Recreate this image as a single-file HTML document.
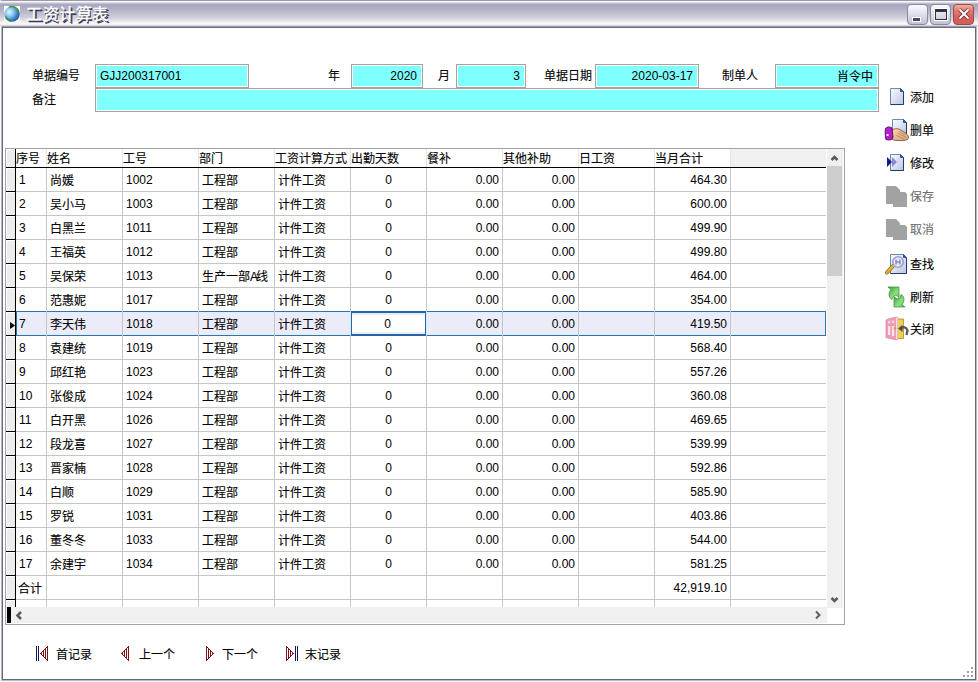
<!DOCTYPE html>
<html lang="zh-CN"><head><meta charset="utf-8">
<style>
*{box-sizing:border-box;margin:0;padding:0}
html,body{width:978px;height:682px;overflow:hidden;background:#fff;font-family:"Liberation Sans",sans-serif;font-size:12px;color:#000}
.a{position:absolute}
#title{left:0;top:0;width:978px;height:28px;background:linear-gradient(to bottom,#9a9aaa 0px,#9a9aaa 1px,#f6f6fb 1px,#f6f6fb 2px,#dedee8 2px,#dedee8 3px,#bebece 3px,#bebece 4px,#ababc2 4px,#ababc2 5px,#a8a8c0 5px,#a8a8c0 6px,#aaaac2 6px,#aaaac2 7px,#adadc4 7px,#adadc4 8px,#b0b0c5 8px,#b0b0c5 9px,#b3b3c7 9px,#b3b3c7 10px,#b6b6c9 10px,#b6b6c9 11px,#b9b9cb 11px,#b9b9cb 12px,#bcbccd 12px,#bcbccd 13px,#bfbfcf 13px,#bfbfcf 14px,#c3c3d2 14px,#c3c3d2 15px,#c7c7d5 15px,#c7c7d5 16px,#cbcbd8 16px,#cbcbd8 17px,#d0d0dc 17px,#d0d0dc 18px,#d6d6e0 18px,#d6d6e0 19px,#dcdce5 19px,#dcdce5 20px,#e3e3ea 20px,#e3e3ea 21px,#ebebf0 21px,#ebebf0 22px,#f3f3f6 22px,#f3f3f6 23px,#f8f8fa 23px,#f8f8fa 24px,#f0f0f4 24px,#f0f0f4 25px,#d4d4dc 25px,#d4d4dc 26px,#9c9cab 26px,#9c9cab 27px,#6c6c7c 27px,#6c6c7c 28px);border-radius:2px 2px 0 0}
#frameL{left:0;top:26px;width:2px;height:655px;background:linear-gradient(to right,#fafafc 0,#fafafc 1px,#b8b8c6 1px,#b8b8c6 2px)}
#frameR{left:976px;top:26px;width:2px;height:655px;background:linear-gradient(to right,#b8b8c6 0,#b8b8c6 1px,#fafafc 1px)}
#frameL2{left:2px;top:27px;width:1px;height:653px;background:#686878}
#frameR2{left:975px;top:27px;width:1px;height:653px;background:#686878}
#frameB{left:2px;top:679px;width:974px;height:1px;background:#686878}
#frameB2{left:1px;top:680px;width:976px;height:2px;background:linear-gradient(to bottom,#b8b8c6 0,#b8b8c6 1px,#fafafc 1px)}
.ttl{left:26px;top:6px;font-size:16px;font-weight:500;color:#fff;-webkit-text-stroke:0.4px #fff;text-shadow:1px 1px 0 #3a3a52,1.5px 1.5px 0 #3a3a52;letter-spacing:0.6px;line-height:18px}
.tb{top:4px;width:21px;height:21px;border:1px solid #8a8aa2;border-radius:4px;background:linear-gradient(to bottom,#fbfbfe,#e4e4ee 40%,#c0c0d4)}
.tbc{background:linear-gradient(to bottom,#f4b0a4,#e47870 30%,#d85c5a 70%,#d06058);border-color:#a04a48}
.lbl{height:14px;line-height:14px;white-space:nowrap}
.ed{border:1px solid #a3a3a3;background:#80ffff;box-shadow:inset 0 0 0 1px #fff;height:24px;line-height:22px;padding:0 5px 0 4px;white-space:nowrap}
.r{text-align:right}
.z{-webkit-text-stroke:0.1px #000;margin-top:1px}
.zs{-webkit-text-stroke:0.1px #000;position:relative;top:1px}
.btn{left:884px;width:70px;height:24px}
.btn .t{position:absolute;left:26px;top:4px;line-height:14px}
.grid{left:5px;top:148px;width:840px;height:477px;border:1px solid #a0a0a0;background:#fff;overflow:hidden}
.nav{top:646px;height:15px}
.nav .t{position:absolute;top:1px;line-height:14px;white-space:nowrap}
.ind{left:6px;width:9px;background:#ededed;border-top:1px solid #fff;border-left:1px solid #fff}
.cl{width:1px;background:#c6c6c6}
.rl{left:16px;width:810px;height:1px;background:#c6c6c6}
.ht{top:151px;line-height:14px;white-space:nowrap}
.dt{height:23px;line-height:23px;padding-top:1px;white-space:nowrap;overflow:hidden}
.sel{background:#ebebfa;border:1px solid #3b6ea8;box-shadow:inset 0 0 0 1px #d4f4ff}
.edc{background:#fff;border:1px solid #2a64a8;border-top-width:2px;border-bottom-width:2px;box-shadow:inset 0 1px 0 #d0f8ff, inset 0 2px 0 #e8e8f8, inset 0 -2px 0 #ebebfa}
</style></head><body>
<div id="title" class="a"></div>
<div id="frameL" class="a"></div>
<div id="frameR" class="a"></div>
<div id="frameB2" class="a"></div><div id="frameB" class="a"></div><div id="frameL2" class="a"></div><div id="frameR2" class="a"></div>
<!-- icon -->
<svg class="a" style="left:4px;top:6px" width="16" height="16" viewBox="0 0 16 16">
<defs><radialGradient id="gl" cx="0.33" cy="0.38" r="0.75"><stop offset="0" stop-color="#e0f6ff"/><stop offset="0.35" stop-color="#8cc8f0"/><stop offset="0.7" stop-color="#3a80c8"/><stop offset="1" stop-color="#1a4a8a"/></radialGradient></defs>
<rect width="16" height="16" fill="#fff"/>
<circle cx="8" cy="8" r="7.8" fill="url(#gl)"/>
<path d="M5 1.2A7.2 7.2 0 0 1 14.8 5.5" stroke="#5a9432" stroke-width="1.6" fill="none"/>
<path d="M1.6 10.5A7.2 7.2 0 0 0 7 15.2" stroke="#4e8a30" stroke-width="1.6" fill="none"/>
</svg>
<div class="a ttl">工资计算表</div>
<div class="a tb" style="left:907px"><div class="a" style="left:4px;top:12px;width:9px;height:5px;background:#484868;border:1px solid #fff"></div></div>
<div class="a tb" style="left:930px"><div class="a" style="left:4px;top:4px;width:12px;height:11px;border:1px solid #303040;border-top-width:3px;box-shadow:0 0 0 1px #fff;background:transparent"></div></div>
<div class="a tb tbc" style="left:953px">
<svg class="a" style="left:2px;top:1px" width="16" height="16" viewBox="0 0 16 16"><path d="M3.5 3.5L12.5 12.5M12.5 3.5L3.5 12.5" stroke="#5a2020" stroke-width="3.4"/><path d="M3.5 3.5L12.5 12.5M12.5 3.5L3.5 12.5" stroke="#fff" stroke-width="2"/></svg>
</div>

<!-- header form -->
<div class="a lbl z" style="left:32px;top:68px">单据编号</div>
<div class="a ed" style="left:95px;top:64px;width:154px">GJJ200317001</div>
<div class="a lbl z" style="left:328px;top:68px">年</div>
<div class="a ed r" style="left:351px;top:64px;width:72px">2020</div>
<div class="a lbl z" style="left:438px;top:68px">月</div>
<div class="a ed r" style="left:456px;top:64px;width:70px">3</div>
<div class="a lbl z" style="left:544px;top:68px">单据日期</div>
<div class="a ed r" style="left:595px;top:64px;width:104px">2020-03-17</div>
<div class="a lbl z" style="left:722px;top:68px">制单人</div>
<div class="a ed r" style="left:775px;top:64px;width:104px"><span class="zs">肖令中</span></div>
<div class="a lbl z" style="left:32px;top:92px">备注</div>
<div class="a ed" style="left:95px;top:88px;width:784px"></div>

<div class="a" style="left:5px;top:148px;width:840px;height:477px;border:1px solid #a3a3a3"></div>
<div class="a" style="left:731px;top:149px;width:95px;height:18px;background:#f0f0f0"></div>
<div class="a ind" style="top:149px;height:18px"></div>
<div class="a ind" style="top:168px;height:23px"></div>
<div class="a ind" style="top:192px;height:23px"></div>
<div class="a ind" style="top:216px;height:23px"></div>
<div class="a ind" style="top:240px;height:23px"></div>
<div class="a ind" style="top:264px;height:23px"></div>
<div class="a ind" style="top:288px;height:23px"></div>
<div class="a ind" style="top:312px;height:23px"></div>
<div class="a ind" style="top:336px;height:23px"></div>
<div class="a ind" style="top:360px;height:23px"></div>
<div class="a ind" style="top:384px;height:23px"></div>
<div class="a ind" style="top:408px;height:23px"></div>
<div class="a ind" style="top:432px;height:23px"></div>
<div class="a ind" style="top:456px;height:23px"></div>
<div class="a ind" style="top:480px;height:23px"></div>
<div class="a ind" style="top:504px;height:23px"></div>
<div class="a ind" style="top:528px;height:23px"></div>
<div class="a ind" style="top:552px;height:23px"></div>
<div class="a ind" style="top:576px;height:23px"></div>
<div class="a ind" style="top:600px;height:7px"></div>
<div class="a sel" style="left:16px;top:311px;width:810px;height:25px"></div>
<div class="a" style="left:46px;top:149px;width:1px;height:18px;background:#e6e6e6"></div>
<div class="a cl" style="left:46px;top:168px;height:439px"></div>
<div class="a" style="left:122px;top:149px;width:1px;height:18px;background:#e6e6e6"></div>
<div class="a cl" style="left:122px;top:168px;height:439px"></div>
<div class="a" style="left:198px;top:149px;width:1px;height:18px;background:#e6e6e6"></div>
<div class="a cl" style="left:198px;top:168px;height:439px"></div>
<div class="a" style="left:274px;top:149px;width:1px;height:18px;background:#e6e6e6"></div>
<div class="a cl" style="left:274px;top:168px;height:439px"></div>
<div class="a" style="left:350px;top:149px;width:1px;height:18px;background:#e6e6e6"></div>
<div class="a cl" style="left:350px;top:168px;height:439px"></div>
<div class="a" style="left:426px;top:149px;width:1px;height:18px;background:#e6e6e6"></div>
<div class="a cl" style="left:426px;top:168px;height:439px"></div>
<div class="a" style="left:502px;top:149px;width:1px;height:18px;background:#e6e6e6"></div>
<div class="a cl" style="left:502px;top:168px;height:439px"></div>
<div class="a" style="left:578px;top:149px;width:1px;height:18px;background:#e6e6e6"></div>
<div class="a cl" style="left:578px;top:168px;height:439px"></div>
<div class="a" style="left:654px;top:149px;width:1px;height:18px;background:#e6e6e6"></div>
<div class="a cl" style="left:654px;top:168px;height:439px"></div>
<div class="a" style="left:730px;top:149px;width:1px;height:18px;background:#e6e6e6"></div>
<div class="a cl" style="left:730px;top:168px;height:439px"></div>
<div class="a" style="left:15px;top:149px;width:1px;height:458px;background:#000"></div>
<div class="a" style="left:6px;top:167px;width:820px;height:1px;background:#000"></div>
<div class="a" style="left:6px;top:191px;width:10px;height:1px;background:#000"></div>
<div class="a rl" style="top:191px"></div>
<div class="a" style="left:6px;top:215px;width:10px;height:1px;background:#000"></div>
<div class="a rl" style="top:215px"></div>
<div class="a" style="left:6px;top:239px;width:10px;height:1px;background:#000"></div>
<div class="a rl" style="top:239px"></div>
<div class="a" style="left:6px;top:263px;width:10px;height:1px;background:#000"></div>
<div class="a rl" style="top:263px"></div>
<div class="a" style="left:6px;top:287px;width:10px;height:1px;background:#000"></div>
<div class="a rl" style="top:287px"></div>
<div class="a" style="left:6px;top:311px;width:10px;height:1px;background:#000"></div>
<div class="a" style="left:6px;top:335px;width:10px;height:1px;background:#000"></div>
<div class="a" style="left:6px;top:359px;width:10px;height:1px;background:#000"></div>
<div class="a rl" style="top:359px"></div>
<div class="a" style="left:6px;top:383px;width:10px;height:1px;background:#000"></div>
<div class="a rl" style="top:383px"></div>
<div class="a" style="left:6px;top:407px;width:10px;height:1px;background:#000"></div>
<div class="a rl" style="top:407px"></div>
<div class="a" style="left:6px;top:431px;width:10px;height:1px;background:#000"></div>
<div class="a rl" style="top:431px"></div>
<div class="a" style="left:6px;top:455px;width:10px;height:1px;background:#000"></div>
<div class="a rl" style="top:455px"></div>
<div class="a" style="left:6px;top:479px;width:10px;height:1px;background:#000"></div>
<div class="a rl" style="top:479px"></div>
<div class="a" style="left:6px;top:503px;width:10px;height:1px;background:#000"></div>
<div class="a rl" style="top:503px"></div>
<div class="a" style="left:6px;top:527px;width:10px;height:1px;background:#000"></div>
<div class="a rl" style="top:527px"></div>
<div class="a" style="left:6px;top:551px;width:10px;height:1px;background:#000"></div>
<div class="a rl" style="top:551px"></div>
<div class="a" style="left:6px;top:575px;width:10px;height:1px;background:#000"></div>
<div class="a rl" style="top:575px"></div>
<div class="a" style="left:6px;top:599px;width:10px;height:1px;background:#000"></div>
<div class="a rl" style="top:599px"></div>
<div class="a ht z" style="left:16px">序号</div>
<div class="a ht z" style="left:47px">姓名</div>
<div class="a ht z" style="left:123px">工号</div>
<div class="a ht z" style="left:199px">部门</div>
<div class="a ht z" style="left:275px">工资计算方式</div>
<div class="a ht z" style="left:351px">出勤天数</div>
<div class="a ht z" style="left:427px">餐补</div>
<div class="a ht z" style="left:503px">其他补助</div>
<div class="a ht z" style="left:579px">日工资</div>
<div class="a ht z" style="left:655px">当月合计</div>
<div class="a dt" style="left:16px;top:168px;width:30px;padding-left:3px">1</div>
<div class="a dt z" style="left:47px;top:168px;width:75px;padding-left:3px">尚媛</div>
<div class="a dt" style="left:123px;top:168px;width:75px;padding-left:3px">1002</div>
<div class="a dt z" style="left:199px;top:168px;width:75px;padding-left:3px">工程部</div>
<div class="a dt z" style="left:275px;top:168px;width:75px;padding-left:3px">计件工资</div>
<div class="a dt" style="left:351px;top:168px;width:75px;text-align:center">0</div>
<div class="a dt" style="left:427px;top:168px;width:75px;padding-right:3px;text-align:right">0.00</div>
<div class="a dt" style="left:503px;top:168px;width:75px;padding-right:3px;text-align:right">0.00</div>
<div class="a dt" style="left:655px;top:168px;width:75px;padding-right:3px;text-align:right">464.30</div>
<div class="a dt" style="left:16px;top:192px;width:30px;padding-left:3px">2</div>
<div class="a dt z" style="left:47px;top:192px;width:75px;padding-left:3px">吴小马</div>
<div class="a dt" style="left:123px;top:192px;width:75px;padding-left:3px">1003</div>
<div class="a dt z" style="left:199px;top:192px;width:75px;padding-left:3px">工程部</div>
<div class="a dt z" style="left:275px;top:192px;width:75px;padding-left:3px">计件工资</div>
<div class="a dt" style="left:351px;top:192px;width:75px;text-align:center">0</div>
<div class="a dt" style="left:427px;top:192px;width:75px;padding-right:3px;text-align:right">0.00</div>
<div class="a dt" style="left:503px;top:192px;width:75px;padding-right:3px;text-align:right">0.00</div>
<div class="a dt" style="left:655px;top:192px;width:75px;padding-right:3px;text-align:right">600.00</div>
<div class="a dt" style="left:16px;top:216px;width:30px;padding-left:3px">3</div>
<div class="a dt z" style="left:47px;top:216px;width:75px;padding-left:3px">白黑兰</div>
<div class="a dt" style="left:123px;top:216px;width:75px;padding-left:3px">1011</div>
<div class="a dt z" style="left:199px;top:216px;width:75px;padding-left:3px">工程部</div>
<div class="a dt z" style="left:275px;top:216px;width:75px;padding-left:3px">计件工资</div>
<div class="a dt" style="left:351px;top:216px;width:75px;text-align:center">0</div>
<div class="a dt" style="left:427px;top:216px;width:75px;padding-right:3px;text-align:right">0.00</div>
<div class="a dt" style="left:503px;top:216px;width:75px;padding-right:3px;text-align:right">0.00</div>
<div class="a dt" style="left:655px;top:216px;width:75px;padding-right:3px;text-align:right">499.90</div>
<div class="a dt" style="left:16px;top:240px;width:30px;padding-left:3px">4</div>
<div class="a dt z" style="left:47px;top:240px;width:75px;padding-left:3px">王福英</div>
<div class="a dt" style="left:123px;top:240px;width:75px;padding-left:3px">1012</div>
<div class="a dt z" style="left:199px;top:240px;width:75px;padding-left:3px">工程部</div>
<div class="a dt z" style="left:275px;top:240px;width:75px;padding-left:3px">计件工资</div>
<div class="a dt" style="left:351px;top:240px;width:75px;text-align:center">0</div>
<div class="a dt" style="left:427px;top:240px;width:75px;padding-right:3px;text-align:right">0.00</div>
<div class="a dt" style="left:503px;top:240px;width:75px;padding-right:3px;text-align:right">0.00</div>
<div class="a dt" style="left:655px;top:240px;width:75px;padding-right:3px;text-align:right">499.80</div>
<div class="a dt" style="left:16px;top:264px;width:30px;padding-left:3px">5</div>
<div class="a dt z" style="left:47px;top:264px;width:75px;padding-left:3px">吴保荣</div>
<div class="a dt" style="left:123px;top:264px;width:75px;padding-left:3px">1013</div>
<div class="a dt z" style="left:199px;top:264px;width:75px;padding-left:3px">生产一部<span style="letter-spacing:-2px">A</span>线</div>
<div class="a dt z" style="left:275px;top:264px;width:75px;padding-left:3px">计件工资</div>
<div class="a dt" style="left:351px;top:264px;width:75px;text-align:center">0</div>
<div class="a dt" style="left:427px;top:264px;width:75px;padding-right:3px;text-align:right">0.00</div>
<div class="a dt" style="left:503px;top:264px;width:75px;padding-right:3px;text-align:right">0.00</div>
<div class="a dt" style="left:655px;top:264px;width:75px;padding-right:3px;text-align:right">464.00</div>
<div class="a dt" style="left:16px;top:288px;width:30px;padding-left:3px">6</div>
<div class="a dt z" style="left:47px;top:288px;width:75px;padding-left:3px">范惠妮</div>
<div class="a dt" style="left:123px;top:288px;width:75px;padding-left:3px">1017</div>
<div class="a dt z" style="left:199px;top:288px;width:75px;padding-left:3px">工程部</div>
<div class="a dt z" style="left:275px;top:288px;width:75px;padding-left:3px">计件工资</div>
<div class="a dt" style="left:351px;top:288px;width:75px;text-align:center">0</div>
<div class="a dt" style="left:427px;top:288px;width:75px;padding-right:3px;text-align:right">0.00</div>
<div class="a dt" style="left:503px;top:288px;width:75px;padding-right:3px;text-align:right">0.00</div>
<div class="a dt" style="left:655px;top:288px;width:75px;padding-right:3px;text-align:right">354.00</div>
<div class="a dt" style="left:16px;top:312px;width:30px;padding-left:3px">7</div>
<div class="a dt z" style="left:47px;top:312px;width:75px;padding-left:3px">李天伟</div>
<div class="a dt" style="left:123px;top:312px;width:75px;padding-left:3px">1018</div>
<div class="a dt z" style="left:199px;top:312px;width:75px;padding-left:3px">工程部</div>
<div class="a dt z" style="left:275px;top:312px;width:75px;padding-left:3px">计件工资</div>
<div class="a dt" style="left:351px;top:312px;width:75px;text-align:center">0</div>
<div class="a dt" style="left:427px;top:312px;width:75px;padding-right:3px;text-align:right">0.00</div>
<div class="a dt" style="left:503px;top:312px;width:75px;padding-right:3px;text-align:right">0.00</div>
<div class="a dt" style="left:655px;top:312px;width:75px;padding-right:3px;text-align:right">419.50</div>
<div class="a dt" style="left:16px;top:336px;width:30px;padding-left:3px">8</div>
<div class="a dt z" style="left:47px;top:336px;width:75px;padding-left:3px">袁建统</div>
<div class="a dt" style="left:123px;top:336px;width:75px;padding-left:3px">1019</div>
<div class="a dt z" style="left:199px;top:336px;width:75px;padding-left:3px">工程部</div>
<div class="a dt z" style="left:275px;top:336px;width:75px;padding-left:3px">计件工资</div>
<div class="a dt" style="left:351px;top:336px;width:75px;text-align:center">0</div>
<div class="a dt" style="left:427px;top:336px;width:75px;padding-right:3px;text-align:right">0.00</div>
<div class="a dt" style="left:503px;top:336px;width:75px;padding-right:3px;text-align:right">0.00</div>
<div class="a dt" style="left:655px;top:336px;width:75px;padding-right:3px;text-align:right">568.40</div>
<div class="a dt" style="left:16px;top:360px;width:30px;padding-left:3px">9</div>
<div class="a dt z" style="left:47px;top:360px;width:75px;padding-left:3px">邱红艳</div>
<div class="a dt" style="left:123px;top:360px;width:75px;padding-left:3px">1023</div>
<div class="a dt z" style="left:199px;top:360px;width:75px;padding-left:3px">工程部</div>
<div class="a dt z" style="left:275px;top:360px;width:75px;padding-left:3px">计件工资</div>
<div class="a dt" style="left:351px;top:360px;width:75px;text-align:center">0</div>
<div class="a dt" style="left:427px;top:360px;width:75px;padding-right:3px;text-align:right">0.00</div>
<div class="a dt" style="left:503px;top:360px;width:75px;padding-right:3px;text-align:right">0.00</div>
<div class="a dt" style="left:655px;top:360px;width:75px;padding-right:3px;text-align:right">557.26</div>
<div class="a dt" style="left:16px;top:384px;width:30px;padding-left:3px">10</div>
<div class="a dt z" style="left:47px;top:384px;width:75px;padding-left:3px">张俊成</div>
<div class="a dt" style="left:123px;top:384px;width:75px;padding-left:3px">1024</div>
<div class="a dt z" style="left:199px;top:384px;width:75px;padding-left:3px">工程部</div>
<div class="a dt z" style="left:275px;top:384px;width:75px;padding-left:3px">计件工资</div>
<div class="a dt" style="left:351px;top:384px;width:75px;text-align:center">0</div>
<div class="a dt" style="left:427px;top:384px;width:75px;padding-right:3px;text-align:right">0.00</div>
<div class="a dt" style="left:503px;top:384px;width:75px;padding-right:3px;text-align:right">0.00</div>
<div class="a dt" style="left:655px;top:384px;width:75px;padding-right:3px;text-align:right">360.08</div>
<div class="a dt" style="left:16px;top:408px;width:30px;padding-left:3px">11</div>
<div class="a dt z" style="left:47px;top:408px;width:75px;padding-left:3px">白开黑</div>
<div class="a dt" style="left:123px;top:408px;width:75px;padding-left:3px">1026</div>
<div class="a dt z" style="left:199px;top:408px;width:75px;padding-left:3px">工程部</div>
<div class="a dt z" style="left:275px;top:408px;width:75px;padding-left:3px">计件工资</div>
<div class="a dt" style="left:351px;top:408px;width:75px;text-align:center">0</div>
<div class="a dt" style="left:427px;top:408px;width:75px;padding-right:3px;text-align:right">0.00</div>
<div class="a dt" style="left:503px;top:408px;width:75px;padding-right:3px;text-align:right">0.00</div>
<div class="a dt" style="left:655px;top:408px;width:75px;padding-right:3px;text-align:right">469.65</div>
<div class="a dt" style="left:16px;top:432px;width:30px;padding-left:3px">12</div>
<div class="a dt z" style="left:47px;top:432px;width:75px;padding-left:3px">段龙喜</div>
<div class="a dt" style="left:123px;top:432px;width:75px;padding-left:3px">1027</div>
<div class="a dt z" style="left:199px;top:432px;width:75px;padding-left:3px">工程部</div>
<div class="a dt z" style="left:275px;top:432px;width:75px;padding-left:3px">计件工资</div>
<div class="a dt" style="left:351px;top:432px;width:75px;text-align:center">0</div>
<div class="a dt" style="left:427px;top:432px;width:75px;padding-right:3px;text-align:right">0.00</div>
<div class="a dt" style="left:503px;top:432px;width:75px;padding-right:3px;text-align:right">0.00</div>
<div class="a dt" style="left:655px;top:432px;width:75px;padding-right:3px;text-align:right">539.99</div>
<div class="a dt" style="left:16px;top:456px;width:30px;padding-left:3px">13</div>
<div class="a dt z" style="left:47px;top:456px;width:75px;padding-left:3px">晋家楠</div>
<div class="a dt" style="left:123px;top:456px;width:75px;padding-left:3px">1028</div>
<div class="a dt z" style="left:199px;top:456px;width:75px;padding-left:3px">工程部</div>
<div class="a dt z" style="left:275px;top:456px;width:75px;padding-left:3px">计件工资</div>
<div class="a dt" style="left:351px;top:456px;width:75px;text-align:center">0</div>
<div class="a dt" style="left:427px;top:456px;width:75px;padding-right:3px;text-align:right">0.00</div>
<div class="a dt" style="left:503px;top:456px;width:75px;padding-right:3px;text-align:right">0.00</div>
<div class="a dt" style="left:655px;top:456px;width:75px;padding-right:3px;text-align:right">592.86</div>
<div class="a dt" style="left:16px;top:480px;width:30px;padding-left:3px">14</div>
<div class="a dt z" style="left:47px;top:480px;width:75px;padding-left:3px">白顺</div>
<div class="a dt" style="left:123px;top:480px;width:75px;padding-left:3px">1029</div>
<div class="a dt z" style="left:199px;top:480px;width:75px;padding-left:3px">工程部</div>
<div class="a dt z" style="left:275px;top:480px;width:75px;padding-left:3px">计件工资</div>
<div class="a dt" style="left:351px;top:480px;width:75px;text-align:center">0</div>
<div class="a dt" style="left:427px;top:480px;width:75px;padding-right:3px;text-align:right">0.00</div>
<div class="a dt" style="left:503px;top:480px;width:75px;padding-right:3px;text-align:right">0.00</div>
<div class="a dt" style="left:655px;top:480px;width:75px;padding-right:3px;text-align:right">585.90</div>
<div class="a dt" style="left:16px;top:504px;width:30px;padding-left:3px">15</div>
<div class="a dt z" style="left:47px;top:504px;width:75px;padding-left:3px">罗锐</div>
<div class="a dt" style="left:123px;top:504px;width:75px;padding-left:3px">1031</div>
<div class="a dt z" style="left:199px;top:504px;width:75px;padding-left:3px">工程部</div>
<div class="a dt z" style="left:275px;top:504px;width:75px;padding-left:3px">计件工资</div>
<div class="a dt" style="left:351px;top:504px;width:75px;text-align:center">0</div>
<div class="a dt" style="left:427px;top:504px;width:75px;padding-right:3px;text-align:right">0.00</div>
<div class="a dt" style="left:503px;top:504px;width:75px;padding-right:3px;text-align:right">0.00</div>
<div class="a dt" style="left:655px;top:504px;width:75px;padding-right:3px;text-align:right">403.86</div>
<div class="a dt" style="left:16px;top:528px;width:30px;padding-left:3px">16</div>
<div class="a dt z" style="left:47px;top:528px;width:75px;padding-left:3px">董冬冬</div>
<div class="a dt" style="left:123px;top:528px;width:75px;padding-left:3px">1033</div>
<div class="a dt z" style="left:199px;top:528px;width:75px;padding-left:3px">工程部</div>
<div class="a dt z" style="left:275px;top:528px;width:75px;padding-left:3px">计件工资</div>
<div class="a dt" style="left:351px;top:528px;width:75px;text-align:center">0</div>
<div class="a dt" style="left:427px;top:528px;width:75px;padding-right:3px;text-align:right">0.00</div>
<div class="a dt" style="left:503px;top:528px;width:75px;padding-right:3px;text-align:right">0.00</div>
<div class="a dt" style="left:655px;top:528px;width:75px;padding-right:3px;text-align:right">544.00</div>
<div class="a dt" style="left:16px;top:552px;width:30px;padding-left:3px">17</div>
<div class="a dt z" style="left:47px;top:552px;width:75px;padding-left:3px">余建宇</div>
<div class="a dt" style="left:123px;top:552px;width:75px;padding-left:3px">1034</div>
<div class="a dt z" style="left:199px;top:552px;width:75px;padding-left:3px">工程部</div>
<div class="a dt z" style="left:275px;top:552px;width:75px;padding-left:3px">计件工资</div>
<div class="a dt" style="left:351px;top:552px;width:75px;text-align:center">0</div>
<div class="a dt" style="left:427px;top:552px;width:75px;padding-right:3px;text-align:right">0.00</div>
<div class="a dt" style="left:503px;top:552px;width:75px;padding-right:3px;text-align:right">0.00</div>
<div class="a dt" style="left:655px;top:552px;width:75px;padding-right:3px;text-align:right">581.25</div>
<div class="a dt z" style="left:16px;top:576px;width:30px;padding-left:2px">合计</div>
<div class="a dt" style="left:655px;top:576px;width:75px;padding-right:3px;text-align:right">42,919.10</div>
<div class="a" style="left:350px;top:312px;width:1px;height:23px;background:#c8f0ff"></div>
<div class="a" style="left:426px;top:312px;width:1px;height:23px;background:#c8f0ff"></div>
<div class="a edc" style="left:351px;top:311px;width:75px;height:25px"></div>
<div class="a dt" style="left:350px;top:312px;width:75px;text-align:center">0</div>
<svg class="a" style="left:10px;top:322px" width="5" height="7" viewBox="0 0 5 7"><path d="M0 0L5 3.5L0 7Z" fill="#000"/></svg>
<div class="a" style="left:827px;top:149px;width:16px;height:459px;background:#f0f0f0"></div>
<div class="a" style="left:827px;top:166px;width:15px;height:110px;background:#cdcdcd"></div>
<svg class="a" style="left:830px;top:154px" width="10" height="8" viewBox="0 0 10 8"><path d="M1.5 6L4.5 3L7.5 6" stroke="#5a5a5a" stroke-width="2.6" fill="none"/></svg>
<svg class="a" style="left:830px;top:596px" width="10" height="8" viewBox="0 0 10 8"><path d="M1.5 2L4.5 5L7.5 2" stroke="#5a5a5a" stroke-width="2.6" fill="none"/></svg>
<div class="a" style="left:6px;top:607px;width:821px;height:16px;background:#f0f0f0"></div>
<div class="a" style="left:7px;top:607px;width:4px;height:16px;background:#000"></div>
<svg class="a" style="left:15px;top:610px" width="8" height="11" viewBox="0 0 8 11"><path d="M6 2L2.5 5.5L6 9" stroke="#5a5a5a" stroke-width="2.6" fill="none"/></svg>
<svg class="a" style="left:814px;top:610px" width="8" height="10" viewBox="0 0 8 10"><path d="M2 1.5L5.5 5L2 8.5" stroke="#606060" stroke-width="2" fill="none"/></svg>
<svg class="a" style="left:880px;top:84px" width="34" height="260" viewBox="880 84 34 260"><defs><linearGradient id="dg" x1="0" y1="0" x2="1" y2="1"><stop offset="0" stop-color="#f4fcff"/><stop offset="0.45" stop-color="#e2e4f2"/><stop offset="1" stop-color="#b8c4e4"/></linearGradient><linearGradient id="gg" x1="0" y1="0" x2="1" y2="1"><stop offset="0" stop-color="#3a9a3a"/><stop offset="0.6" stop-color="#8ee07e"/><stop offset="1" stop-color="#50b050"/></linearGradient><linearGradient id="hg" x1="0" y1="0" x2="1" y2="1"><stop offset="0" stop-color="#f8d4b0"/><stop offset="1" stop-color="#d8a478"/></linearGradient></defs><path d="M890.5 88.5H900.5L903.5 91.5V104.5H890.5Z" fill="url(#dg)" stroke="#6a8ab0" stroke-width="1"/><path d="M903.5 91.5V104.5H890.5" fill="none" stroke="#1e3c6c" stroke-width="1"/><path d="M900.5 88.5V91.5H903.5Z" fill="#2a5a9a" stroke="#2a5a9a" stroke-width="1"/><path d="M892.5 119.5H903.5L906.5 122.5V134.5H892.5Z" fill="url(#dg)" stroke="#6a8ab0" stroke-width="1"/><path d="M906.5 122.5V134.5H892.5" fill="none" stroke="#1e3c6c" stroke-width="1"/><path d="M903.5 119.5V122.5H906.5Z" fill="#2a5a9a" stroke="#2a5a9a" stroke-width="1"/><path d="M891.5 130.5C894 128.5 897 128 900 129.5L904 132C906.5 133.5 908.5 135.5 908.5 137.5C908.5 139.5 906 140.5 903 140.5L897 140.5C894 140.5 892 139.5 891 138Z" fill="url(#hg)" stroke="#7a4a2a" stroke-width="0.8"/><path d="M898 133.5L906 137M896.5 135.5L904.5 139M899 131.5L905 134.5" stroke="#a06a40" stroke-width="0.6" fill="none"/><path d="M885.5 128.5C887 126.5 890 126.5 892 128L893 137.5C892.5 140 889 140.5 886 139.5C885 136 885 132 885.5 128.5Z" fill="#b81ed0" stroke="#4a0a5a" stroke-width="0.9"/><rect x="886.5" y="134" width="2" height="2" fill="#fff"/><path d="M890.5 154.5H900.5L903.5 157.5V170.5H890.5Z" fill="url(#dg)" stroke="#6a8ab0" stroke-width="1"/><path d="M903.5 157.5V170.5H890.5" fill="none" stroke="#1e3c6c" stroke-width="1"/><path d="M900.5 154.5V157.5H903.5Z" fill="#2a5a9a" stroke="#2a5a9a" stroke-width="1"/><path d="M897 157L902 162L897 167Z" fill="#d8d8f4"/><path d="M892 157L897 162L892 167Z" fill="#8a8ad0"/><path d="M887 157L892 162L887 167Z" fill="#101890"/><path d="M886 186H896L900 190V192H905L907 194V207H893V204H886Z" fill="#a2a2a2"/><path d="M886 219H896L900 223V225H905L907 227V240H893V237H886Z" fill="#a2a2a2"/><path d="M890.5 254.5H903.5L906.5 257.5V273.5H890.5Z" fill="url(#dg)" stroke="#6a8ab0" stroke-width="1"/><path d="M906.5 257.5V273.5H890.5" fill="none" stroke="#1e3c6c" stroke-width="1"/><path d="M903.5 254.5V257.5H906.5Z" fill="#2a5a9a" stroke="#2a5a9a" stroke-width="1"/><path d="M893 266L887 272.5" stroke="#7a5a10" stroke-width="4" stroke-linecap="round"/><path d="M893 266L887 272.5" stroke="#e0b030" stroke-width="2.6" stroke-linecap="round"/><circle cx="898" cy="262" r="5.3" fill="#e4e8fa" stroke="#a0a0cc" stroke-width="1.6"/><path d="M896 259.5V264.5M900 259.5V264.5M896 262H900" stroke="#8090c0" stroke-width="1.4"/><path d="M888 287H899V297.5C897.5 296 896 295 894.5 295.5C893 296 892.5 298 892 299.5C890 298.5 889 297 889 294.5C889 292 890 290.5 891 289.5Z" fill="url(#gg)" stroke="#3a8a3a" stroke-width="0.7"/><path d="M905 307H894V296.5C895.5 298 897 299 898.5 298.5C900 298 900.5 296 901 294.5C903 295.5 904 297 904 299.5C904 302 903 303.5 902 304.5Z" fill="url(#gg)" stroke="#3a8a3a" stroke-width="0.7"/><path d="M897.5 319H903.5V338.5H897.5Z" fill="#f0d050" stroke="#b08a20" stroke-width="0.8"/><path d="M886 320L890 318.5L897.5 317V340L890 338.5L886 337.5Z" fill="#ec9fb4" stroke="#d8849c" stroke-width="0.8"/><rect x="896" y="317.5" width="1.6" height="22" fill="#f8dce6"/><rect x="888" y="321" width="2.2" height="2.5" fill="#f8d4e0"/><rect x="892" y="320.5" width="2.2" height="2.5" fill="#f8d4e0"/><rect x="888" y="326" width="2.2" height="9" fill="#fbe4ec"/><rect x="892" y="326" width="2.2" height="10" fill="#fbe4ec"/><circle cx="895" cy="328.5" r="1.3" fill="#d89a28"/><path d="M900.5 328.5C903 326.5 906.5 327 907.5 330.5L906.5 335" stroke="#5a5a62" stroke-width="2.4" fill="none"/><path d="M898 328.5L902.5 325V332Z" fill="#4a4a52"/></svg>
<div class="a lbl" style="left:910px;top:91px;color:#000;-webkit-text-stroke:0.1px #000">添加</div>
<div class="a lbl" style="left:910px;top:124px;color:#000;-webkit-text-stroke:0.1px #000">删单</div>
<div class="a lbl" style="left:910px;top:157px;color:#000;-webkit-text-stroke:0.1px #000">修改</div>
<div class="a lbl" style="left:910px;top:190px;color:#6d6d6d;-webkit-text-stroke:0.1px #6d6d6d">保存</div>
<div class="a lbl" style="left:910px;top:223px;color:#6d6d6d;-webkit-text-stroke:0.1px #6d6d6d">取消</div>
<div class="a lbl" style="left:910px;top:258px;color:#000;-webkit-text-stroke:0.1px #000">查找</div>
<div class="a lbl" style="left:910px;top:291px;color:#000;-webkit-text-stroke:0.1px #000">刷新</div>
<div class="a lbl" style="left:910px;top:323px;color:#000;-webkit-text-stroke:0.1px #000">关闭</div>
<svg class="a" style="left:30px;top:644px" width="280" height="20" viewBox="30 644 280 20" shape-rendering="crispEdges"><rect x="36" y="646" width="1" height="15" fill="#101860"/><rect x="38" y="646" width="1" height="15" fill="#101860"/><rect x="40" y="653" width="1" height="1" fill="#7a1414"/><rect x="41" y="652" width="1" height="3" fill="#7a1414"/><rect x="42" y="651" width="1" height="1" fill="#7a1414"/><rect x="42" y="655" width="1" height="1" fill="#7a1414"/><rect x="43" y="650" width="1" height="7" fill="#7a1414"/><rect x="44" y="649" width="1" height="1" fill="#7a1414"/><rect x="44" y="657" width="1" height="1" fill="#7a1414"/><rect x="45" y="648" width="1" height="11" fill="#7a1414"/><rect x="46" y="647" width="1" height="1" fill="#7a1414"/><rect x="46" y="659" width="1" height="1" fill="#7a1414"/><rect x="47" y="646" width="1" height="15" fill="#7a1414"/><rect x="121" y="653" width="1" height="1" fill="#7a1414"/><rect x="122" y="652" width="1" height="3" fill="#7a1414"/><rect x="123" y="651" width="1" height="1" fill="#7a1414"/><rect x="123" y="655" width="1" height="1" fill="#7a1414"/><rect x="124" y="650" width="1" height="7" fill="#7a1414"/><rect x="125" y="649" width="1" height="1" fill="#7a1414"/><rect x="125" y="657" width="1" height="1" fill="#7a1414"/><rect x="126" y="648" width="1" height="11" fill="#7a1414"/><rect x="127" y="647" width="1" height="1" fill="#7a1414"/><rect x="127" y="659" width="1" height="1" fill="#7a1414"/><rect x="128" y="646" width="1" height="15" fill="#7a1414"/><rect x="213" y="653" width="1" height="1" fill="#7a1414"/><rect x="212" y="652" width="1" height="3" fill="#7a1414"/><rect x="211" y="651" width="1" height="1" fill="#7a1414"/><rect x="211" y="655" width="1" height="1" fill="#7a1414"/><rect x="210" y="650" width="1" height="7" fill="#7a1414"/><rect x="209" y="649" width="1" height="1" fill="#7a1414"/><rect x="209" y="657" width="1" height="1" fill="#7a1414"/><rect x="208" y="648" width="1" height="11" fill="#7a1414"/><rect x="207" y="647" width="1" height="1" fill="#7a1414"/><rect x="207" y="659" width="1" height="1" fill="#7a1414"/><rect x="206" y="646" width="1" height="15" fill="#7a1414"/><rect x="293" y="653" width="1" height="1" fill="#7a1414"/><rect x="292" y="652" width="1" height="3" fill="#7a1414"/><rect x="291" y="651" width="1" height="1" fill="#7a1414"/><rect x="291" y="655" width="1" height="1" fill="#7a1414"/><rect x="290" y="650" width="1" height="7" fill="#7a1414"/><rect x="289" y="649" width="1" height="1" fill="#7a1414"/><rect x="289" y="657" width="1" height="1" fill="#7a1414"/><rect x="288" y="648" width="1" height="11" fill="#7a1414"/><rect x="287" y="647" width="1" height="1" fill="#7a1414"/><rect x="287" y="659" width="1" height="1" fill="#7a1414"/><rect x="286" y="646" width="1" height="15" fill="#7a1414"/><rect x="295" y="646" width="1" height="15" fill="#101860"/><rect x="297" y="646" width="1" height="15" fill="#101860"/></svg>
<div class="a lbl z" style="left:56px;top:647px">首记录</div>
<div class="a lbl z" style="left:139px;top:647px">上一个</div>
<div class="a lbl z" style="left:222px;top:647px">下一个</div>
<div class="a lbl z" style="left:305px;top:647px">末记录</div>
<div class="a" style="left:971px;top:667px;width:2px;height:2px;background:#a0a0a8"></div>
<div class="a" style="left:967px;top:671px;width:2px;height:2px;background:#a0a0a8"></div>
<div class="a" style="left:971px;top:671px;width:2px;height:2px;background:#a0a0a8"></div>
<div class="a" style="left:963px;top:675px;width:2px;height:2px;background:#a0a0a8"></div>
<div class="a" style="left:967px;top:675px;width:2px;height:2px;background:#a0a0a8"></div>
<div class="a" style="left:971px;top:675px;width:2px;height:2px;background:#a0a0a8"></div>
</body></html>
